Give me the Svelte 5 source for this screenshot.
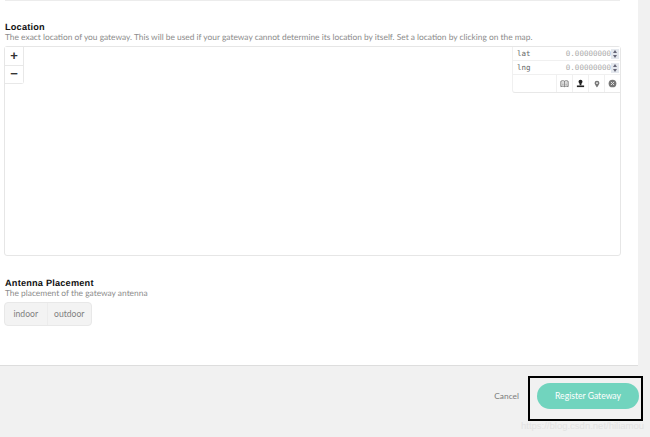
<script>
  let placement = $state('');
</script>

<div class="page">
  <main class="content">
    <div class="top-rule"></div>

    <section class="location">
      <h2>Location</h2>
      <p>The exact location of you gateway. This will be used if your gateway cannot determine its location by itself. Set a location by clicking on the map.</p>
      <div class="map">
        <div class="zoom">
          <button type="button">+</button>
          <button type="button">−</button>
        </div>
        <div class="coords">
          <div class="coord">
            <span class="key">lat</span>
            <span class="num">0.00000000</span>
            <span class="spin"><i></i><i class="down"></i></span>
          </div>
          <div class="coord">
            <span class="key">lng</span>
            <span class="num">0.00000000</span>
            <span class="spin"><i></i><i class="down"></i></span>
          </div>
          <div class="tools">
            <span class="tool">
              <svg viewBox="0 0 10 10" width="9" height="9"><path d="M1 2.500c1.300-.7 2.800-.7 4 0 1.200-.7 2.700-.7 4 0v6c-1.300-.7-2.800-.7-4 0-1.200-.7-2.700-.7-4 0z" fill="none" stroke="#666" stroke-width="1"/><path d="M5 2.500v6M2.500 4.500h1.500M2.500 6.300h1.500M6 4.500h1.500M6 6.300h1.500" stroke="#666" stroke-width=".8"/></svg>
            </span>
            <span class="tool">
              <svg viewBox="0 0 10 10" width="9" height="9"><circle cx="5" cy="3" r="2.200" fill="#222"/><path d="M4 4.500h2v2.500H4z" fill="#222"/><rect x="1" y="7.200" width="8" height="1.800" fill="#222"/></svg>
            </span>
            <span class="tool">
              <svg viewBox="0 0 10 10" width="8" height="8"><path d="M5 .8a3 3 0 0 1 3 3c0 2-3 5.500-3 5.500S2 5.800 2 3.800a3 3 0 0 1 3-3z" fill="#777"/><circle cx="5" cy="3.800" r="1.100" fill="#fff"/></svg>
            </span>
            <span class="tool">
              <svg viewBox="0 0 10 10" width="9" height="9"><circle cx="5" cy="5" r="4.300" fill="#777"/><path d="M3.300 3.300l3.400 3.400M6.700 3.300L3.300 6.700" stroke="#ddd" stroke-width="1.100"/></svg>
            </span>
          </div>
        </div>
      </div>
    </section>

    <section class="placement">
      <h2>Antenna Placement</h2>
      <p>The placement of the gateway antenna</p>
      <div class="segments">
        <button type="button" class:active={placement === 'indoor'} onclick={() => (placement = 'indoor')}>indoor</button>
        <button type="button" class:active={placement === 'outdoor'} onclick={() => (placement = 'outdoor')}>outdoor</button>
      </div>
    </section>

    <footer class="actions">
      <button type="button" class="cancel">Cancel</button>
      <div class="highlight">
        <button type="button" class="submit">Register Gateway</button>
      </div>
    </footer>
  </main>
  <div class="scrollbar"></div>
  <span class="watermark">https://blog.csdn.net/hiliamou</span>
</div>

<style>
  :global(body) {
    margin: 0;
    background: #fff;
    font-family: Lato, "Liberation Sans", sans-serif;
    text-rendering: geometricPrecision;
  }

  .page {
    position: relative;
    display: flex;
    width: 650px;
    height: 437px;
    overflow: hidden;
  }

  .content {
    width: 638px;
    display: flex;
    flex-direction: column;
    background: #fff;
  }

  .scrollbar {
    width: 12px;
    background: #f1f1f1;
  }

  .top-rule {
    height: 1px;
    margin: 0 18px 0 5px;
    background: #ececec;
  }

  h2 {
    margin: 0;
    font-family: "Liberation Sans", Arial, sans-serif;
    font-size: 9.200px;
    line-height: 9px;
    font-weight: 700;
    color: #111;
    letter-spacing: 0.2px;
  }

  p {
    margin: 0;
    font-size: 8.400px;
    line-height: 11px;
    color: #8c8c8c;
  }

  .location {
    margin: 22px 17px 0 4px;
  }

  .location h2,
  .location p,
  .placement h2,
  .placement p {
    padding-left: 1px;
  }

  .map {
    position: relative;
    height: 208px;
    border: 1px solid #e6e6e6;
    border-radius: 3px;
    margin-top: 3px;
  }

  .zoom {
    position: absolute;
    top: 0;
    left: 0;
    width: 18px;
    display: flex;
    flex-direction: column;
    border: 1px solid #e8e8e8;
    border-top: 0;
    border-left: 0;
    border-radius: 0 0 3px 0;
  }

  .zoom button {
    height: 18px;
    padding: 0 0 2px;
    border: 0;
    background: #fff;
    font-family: "Liberation Sans", sans-serif;
    font-size: 13px;
    font-weight: 700;
    color: #333;
  }

  .zoom button + button {
    border-top: 1px solid #e8e8e8;
  }

  .coords {
    position: absolute;
    top: 0;
    right: 0;
    width: 107px;
    border-left: 1px solid #f0f0f0;
    border-bottom: 1px solid #e8e8e8;
    border-radius: 0 0 0 3px;
    background: #fff;
  }

  .coord {
    display: flex;
    align-items: center;
    height: 13px;
    border-bottom: 1px solid #f0f0f0;
    font-family: "DejaVu Sans Mono", "Liberation Mono", monospace;
    font-size: 7.500px;
  }

  .key {
    margin-left: 4px;
    color: #666;
  }

  .num {
    margin-left: auto;
    color: #aaa;
  }

  .spin {
    width: 8px;
    height: 10px;
    margin-right: 1px;
    display: flex;
    flex-direction: column;
    align-items: center;
    justify-content: space-around;
    background: #e4e8ee;
  }

  .spin i {
    width: 0;
    height: 0;
    border: 2px solid transparent;
    border-top: 0;
    border-bottom: 3px solid #667;
  }

  .spin i.down {
    border-bottom: 0;
    border-top: 3px solid #667;
  }

  .tools {
    display: flex;
    justify-content: flex-end;
    height: 17px;
  }

  .tool {
    width: 16px;
    display: flex;
    align-items: center;
    justify-content: center;
    border-left: 1px solid #f0f0f0;
    box-sizing: border-box;
  }

  .placement {
    margin: 23px 0 0 4px;
  }

  .segments {
    display: inline-flex;
    height: 24px;
    margin-top: 3px;
    border: 1px solid #e8e8e8;
    border-radius: 4px;
    background: #f3f3f3;
    box-sizing: border-box;
    overflow: hidden;
  }

  .segments button {
    padding: 0 8.500px;
    border: 0;
    background: transparent;
    font-family: Lato, sans-serif;
    font-size: 8.600px;
    color: #808080;
  }

  .segments button + button {
    padding: 0 7px 0 6.500px;
    border-left: 1px solid #ececec;
  }

  .segments button.active {
    background: #71d4be;
    color: #fff;
  }

  .actions {
    margin-top: auto;
    height: 72px;
    display: flex;
    justify-content: flex-end;
    align-items: flex-start;
    background: #f1f1f1;
    border-top: 1px solid #ddd;
    box-sizing: border-box;
  }

  .cancel {
    margin: 23px 9px 0 0;
    padding: 0;
    border: 0;
    background: none;
    font-family: Lato, sans-serif;
    font-size: 8.400px;
    line-height: 14px;
    color: #7c7c7c;
  }

  .highlight {
    position: relative;
    z-index: 1;
    display: flex;
    align-items: flex-start;
    box-sizing: border-box;
    width: 115px;
    height: 45px;
    margin: 10px -5px 0 0;
    padding: 5px 0 0 7px;
    border: 2px solid #000;
    flex-shrink: 0;
  }

  .submit {
    width: 102px;
    height: 26px;
    padding: 0;
    border: 0;
    border-radius: 13px;
    background: #71d4be;
    color: #fff;
    font-family: Lato, sans-serif;
    font-size: 8.600px;
  }

  .watermark {
    position: absolute;
    left: 521px;
    top: 421px;
    font-family: "Liberation Sans", sans-serif;
    font-size: 9.500px;
    color: #e2e2e2;
  }
</style>
